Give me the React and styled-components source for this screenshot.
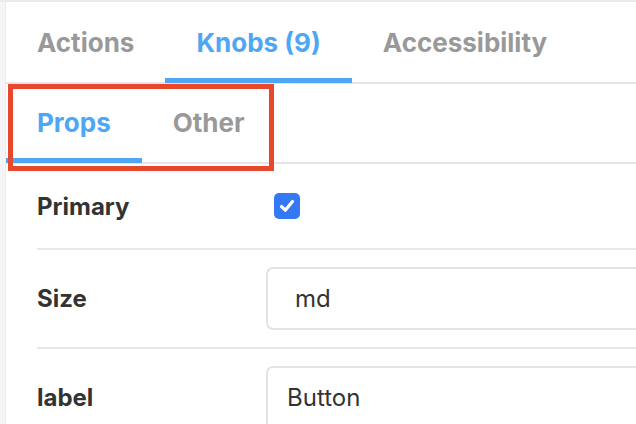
import React from 'react'
import styled, { createGlobalStyle } from 'styled-components'

const GlobalStyle = createGlobalStyle`
  html, body {
    margin: 0;
    padding: 0;
    background: #ffffff;
  }
  body {
    font-family: Inter, Roboto, "Liberation Sans", sans-serif;
    -webkit-font-smoothing: antialiased;
  }
`

const Page = styled.div`
  display: flex;
  width: 636px;
  height: 424px;
  overflow: hidden;
  border-top: 2px solid #ebebeb;
  box-sizing: border-box;
`

const SideStrip = styled.div`
  flex: 0 0 5px;
  background: #f4f5f7;
  border-right: 1px solid #ececec;
`

const Panel = styled.div`
  position: relative;
  flex: 1;
  min-width: 0;
  display: flex;
  flex-direction: column;
  background: #fff;
`

const TabBar = styled.div`
  flex-shrink: 0;
  display: flex;
  height: ${(p) => p.$height}px;
  border-bottom: 2px solid #e6e6e6;
  box-sizing: border-box;
`

const Tab = styled.div`
  display: flex;
  align-items: center;
  padding: 0 31px;
  font-size: 26px;
  font-weight: 700;
  white-space: nowrap;
  color: ${(p) => (p.$active ? '#4fa6f5' : '#999999')};
  box-shadow: ${(p) => (p.$active ? 'inset 0 -5px 0 #4fa6f5' : 'none')};
  margin-bottom: -1px;
  padding-bottom: ${(p) => p.$lift || 0}px;
`

const Highlight = styled.div`
  position: absolute;
  left: 2px;
  top: 82px;
  width: 266px;
  height: 87px;
  border: 5px solid #e8472c;
  box-sizing: border-box;
  pointer-events: none;
`

const Rows = styled.div`
  flex-shrink: 0;
  margin-left: 31px;
`

const Row = styled.div`
  display: grid;
  grid-template-columns: 229px 400px;
  align-items: center;
  min-height: 50px;
  padding: 17px 0;
  border-bottom: 2px solid #e8e8e8;
`

const Label = styled.div`
  font-size: 24px;
  font-weight: 700;
  color: #333333;
`

const Checkbox = styled.div`
  width: 26px;
  height: 26px;
  margin-left: 8px;
  border-radius: 5px;
  background: #3478f6;
  display: flex;
  align-items: center;
  justify-content: center;
`

const Field = styled.div`
  height: 63px;
  box-sizing: border-box;
  border: 2px solid #e3e3e3;
  border-radius: 7px;
  display: flex;
  align-items: center;
  padding-left: ${(p) => p.$inset}px;
  font-size: 24px;
  color: #333333;
`

export default function App() {
  return (
    <>
      <GlobalStyle />
      <Page>
        <SideStrip />
        <Panel>
          <TabBar $height={82}>
            <Tab>Actions</Tab>
            <Tab $active>Knobs (9)</Tab>
            <Tab>Accessibility</Tab>
          </TabBar>
          <TabBar $height={80}>
            <Tab $active $lift={2}>Props</Tab>
            <Tab $lift={2}>Other</Tab>
          </TabBar>
          <Rows>
            <Row>
              <Label>Primary</Label>
              <Checkbox>
                <svg width="18" height="18" viewBox="0 0 18 18">
                  <path d="M3.5 9.5 L7.3 13.2 L14.5 4.5" fill="none" stroke="#fff" strokeWidth="3.2" strokeLinecap="round" strokeLinejoin="round" />
                </svg>
              </Checkbox>
            </Row>
            <Row>
              <Label>Size</Label>
              <Field $inset={27}>md</Field>
            </Row>
            <Row>
              <Label>label</Label>
              <Field $inset={19}>Button</Field>
            </Row>
          </Rows>
          <Highlight />
        </Panel>
      </Page>
    </>
  )
}
